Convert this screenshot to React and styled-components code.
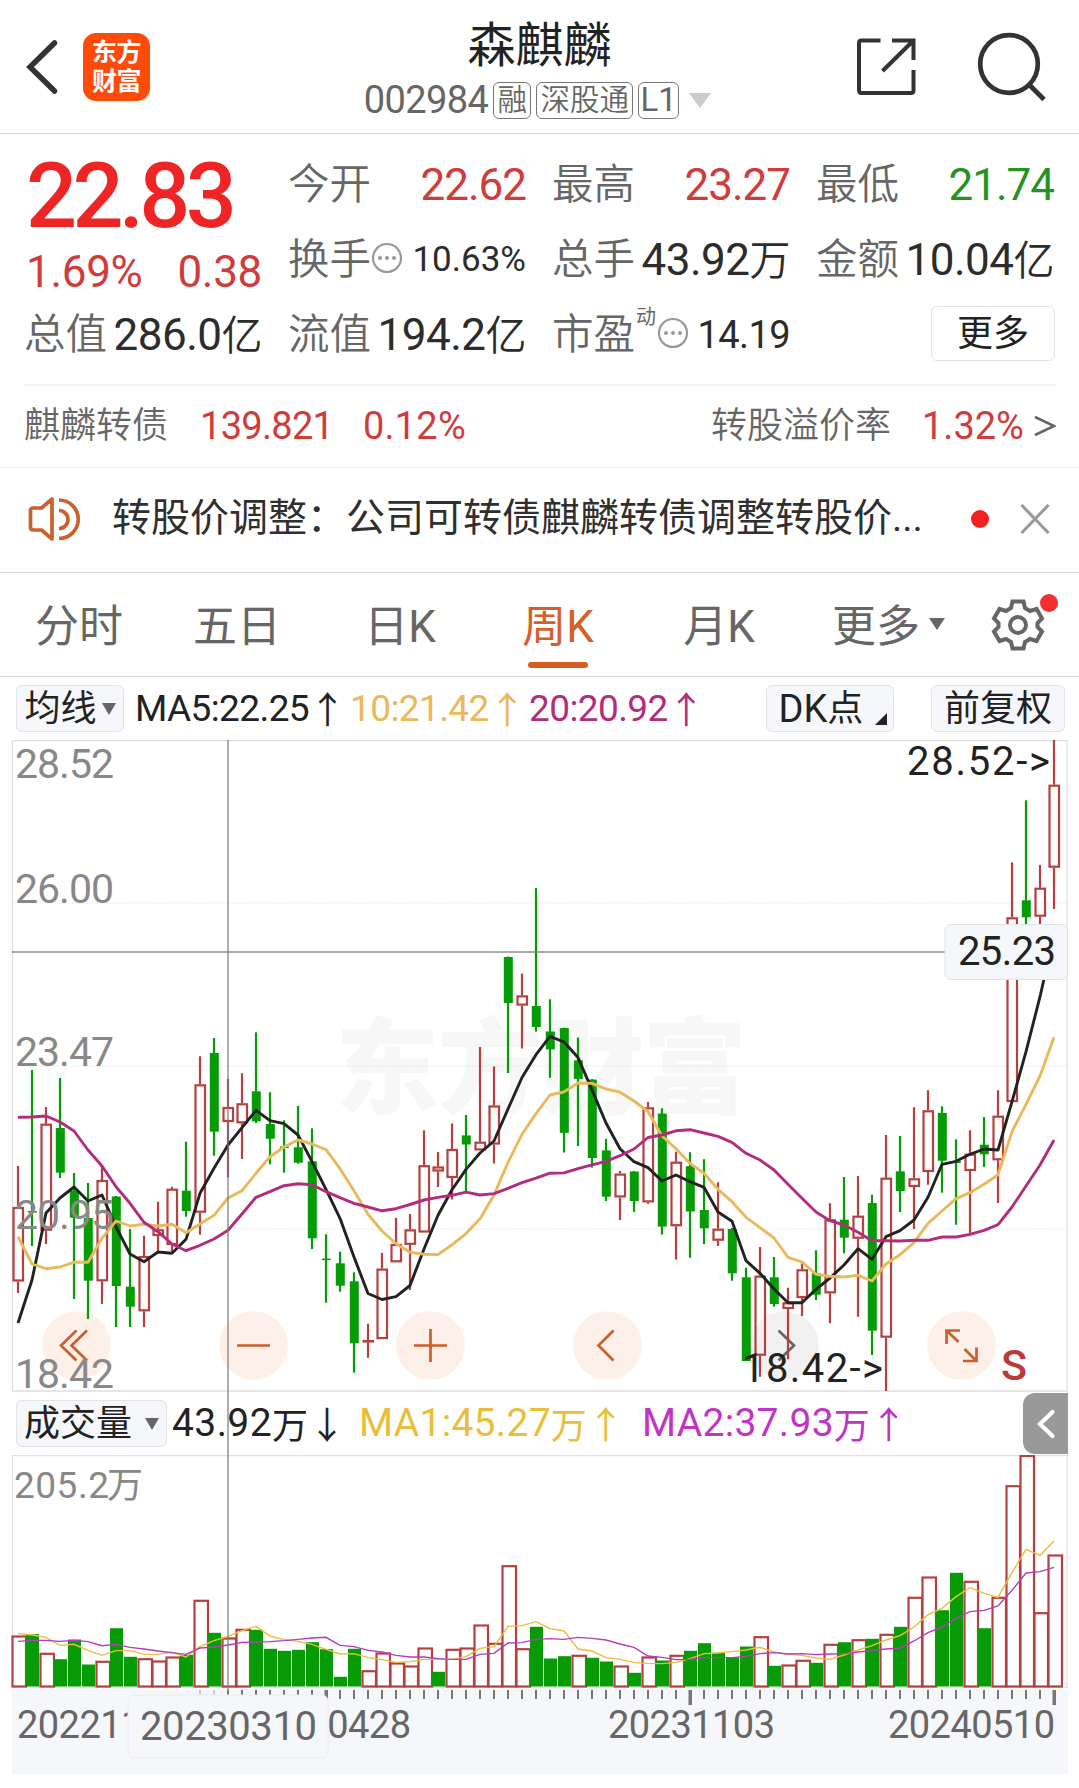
import React from "react";
import styled, { createGlobalStyle, css } from "styled-components";

const RED = "#b5403f";
const GREEN = "#079c07";
const STEP = 14;
const FIRST_X = 18;

const x = (i) => FIRST_X + i * STEP;

// [up/down, high, body top, body bottom, low], measured from the top of the plot
const candles = [
  ["r", 426, 467, 541.5, 553], ["g", 330, 471, 472, 506], ["r", 367, 383.7, 490.7, 504],
  ["g", 338, 388, 432.7, 438], ["g", 433, 450.7, 477.7, 559], ["g", 443, 478, 540.7, 579],
  ["r", 427, 440, 541.3, 564], ["g", 456, 456.5, 546, 587], ["g", 489, 546.7, 566.7, 587],
  ["r", 495.7, 516, 571.3, 587], ["r", 461.7, 489.3, 496, 511], ["r", 446.7, 448.7, 505, 511.7],
  ["g", 401.7, 450.7, 471, 476.7], ["r", 316.3, 344.3, 472.7, 494.7], ["g", 298, 313, 391.7, 415.7],
  ["r", 339, 367, 382, 437.3], ["r", 333.3, 363.3, 383.3, 419], ["g", 292.3, 351.3, 381.3, 383],
  ["g", 352.3, 384, 398.7, 424.3], ["g", 380.3, 406.5, 408, 432.7], ["g", 366, 407.3, 422.7, 423.7],
  ["g", 388.3, 421.3, 498.3, 509], ["g", 494.3, 518.6, 520, 562.7], ["g", 511.7, 523.3, 545.7, 551.7],
  ["g", 532.3, 541.3, 603.3, 632.7], ["r", 583.7, 600, 602.5, 617.7], ["r", 512.9, 528.6, 599.1, 599.1],
  ["r", 477.8, 504, 522.3, 522.3], ["r", 474, 489.4, 504.8, 550], ["r", 390.4, 425.2, 492.5, 492.5],
  ["r", 412, 426.5, 431.5, 447], ["r", 383.4, 409, 438, 459.5], ["g", 375, 395.4, 404.5, 451.5],
  ["r", 307, 401.7, 410.4, 410.4], ["r", 326.6, 365.5, 404.5, 423.4], ["g", 216.5, 217, 263, 333],
  ["r", 233.6, 255.4, 265.6, 308.4], ["g", 148, 266, 287, 291.5], ["g", 259.3, 291.5, 309.4, 337.8],
  ["g", 287.7, 288, 392.9, 412.5], ["g", 297.5, 320.3, 338.9, 406], ["g", 339, 339.6, 418, 427.6],
  ["g", 398.9, 410.4, 456.7, 461], ["r", 431, 433.6, 457.4, 480], ["g", 431, 431.5, 461, 471.8],
  ["r", 362, 367.3, 462.4, 464], ["g", 368.3, 373.6, 486.6, 494.6], ["r", 411.8, 421.7, 486.2, 519.5],
  ["g", 412.2, 426.2, 471.5, 517.8], ["g", 419.2, 470, 488.3, 504], ["r", 442.3, 488.7, 500.7, 506],
  ["g", 488, 489, 533.3, 540.7], ["g", 527.7, 537.3, 621, 621], ["r", 507, 535.7, 615.7, 636.7],
  ["g", 517, 537.3, 564, 566.7], ["r", 547.7, 562.3, 569, 619.3], ["r", 523.3, 529.3, 558, 576],
  ["g", 510.3, 533.3, 554.7, 560], ["r", 463.3, 479.3, 553.3, 583.3], ["g", 437, 479.7, 497.7, 513.3],
  ["r", 436, 475.7, 498.7, 576.7], ["g", 454.7, 463, 590.7, 615], ["r", 395, 437.7, 597.7, 651],
  ["g", 396, 431.3, 451, 472], ["r", 367.3, 438.3, 447, 489], ["r", 350.3, 370.3, 432, 444.7],
  ["g", 366.3, 373, 420.7, 452.7], ["g", 399.3, 421, 423, 484.7], ["r", 390.3, 413.7, 431, 493.3],
  ["g", 377, 404.7, 414.3, 427], ["r", 350.3, 375.7, 420.3, 463], ["r", 122.3, 177.3, 362, 362],
  ["g", 60.3, 160.3, 177.3, 200], ["r", 125, 147.7, 176.7, 200], ["r", 0, 44.7, 127.7, 169],
];

const ma5 = [
  583, 540, 473, 458, 447, 461, 455, 487, 514, 521.7, 512, 513.3, 499.3, 453.3, 428.3, 405, 387.7,
  370.3, 380.7, 383.7, 395, 421.7, 449.3, 478.3, 517, 553.5, 559.5, 556.7, 545.5, 509, 475.3, 449.7,
  429.4, 413, 401, 369, 337.5, 314.7, 296.4, 302, 317.5, 349.8, 383, 408.7, 421.7, 427.6, 441, 435,
  441.7, 447.3, 472, 481.3, 520.7, 533.3, 549, 562.7, 562.7, 549.3, 538, 525, 508.7, 519.3, 496.7,
  490.7, 480, 457.3, 424.3, 421.3, 414.3, 409, 410, 361.7, 311.7, 256.7, 195,
];

const ma10 = [
  496.7, 524, 528.7, 527, 522.3, 522.3, 498.3, 481, 486, 484.3, 486, 484.3, 492.7, 484, 475.3, 458,
  450.7, 433.3, 416.7, 407, 400, 404, 409.7, 428.7, 450.8, 474.3, 491, 503.7, 512.2, 514.3, 514.6,
  504.8, 493.6, 478.8, 455, 422.4, 394.3, 373.6, 355, 351.9, 343, 343.4, 349, 352.2, 361, 371.5, 396,
  408.7, 423.4, 433.2, 449.3, 461.7, 477.3, 487.7, 498, 517.3, 522, 534.3, 536.3, 537, 535.3, 541, 524,
  514.7, 502.7, 483.3, 471, 458.7, 452.7, 444.3, 434.7, 391.7, 364.3, 336, 297.3,
];

const ma20 = [
  377.3, 377, 376, 382, 391, 410, 426, 446.7, 463.3, 482.3, 491.7, 504, 510.7, 505.3, 499, 490.3, 474,
  457.3, 451.7, 445.7, 443.7, 444.7, 451.7, 457.7, 463.3, 467, 470.8, 468.7, 464.5, 460, 457.4, 455.3,
  452.2, 455, 453.6, 448.3, 442.7, 438.2, 433.2, 432.9, 428.7, 424.8, 421.3, 415.7, 409, 397.5, 395,
  390.8, 389.7, 393, 396.3, 402.3, 413.3, 420, 430, 444.3, 458.3, 472, 480.7, 485, 492.3, 500.7, 500.7,
  501, 500.3, 500.3, 497, 497, 494.3, 490.3, 484.7, 467, 446, 425, 400,
];

const volumeColors =
  "rgrgggrggrrrgrgrrggggggggrrrrrgrrrrrrg" + "ggrggrgrgrgggggrgrrgrgrgrgrrggrgrrrrr";

const volumes = [
  51, 52.3, 33.7, 27.3, 47, 22, 25.7, 58.3, 29.7, 28.3, 26, 30, 31.7, 86.7, 53.7, 49, 57.7, 56.7, 37.7,
  35.7, 36.7, 44.3, 37.3, 9.7, 37.7, 16.3, 34, 24, 21, 39, 14.7, 37.7, 39, 62, 43.7, 121.3, 38.3, 59.7,
  28, 30.3, 31.7, 28.7, 25, 21, 13.7, 30, 26, 31.7, 35.7, 43.3, 33.7, 29.3, 40, 50.3, 20.7, 22, 26.7,
  23.7, 42.7, 44.3, 47.3, 47.7, 52.7, 59.7, 89.7, 110, 76.3, 113.7, 105.7, 58.3, 89.7, 201.3, 231.5,
  74.3, 132,
];

// thirds of a pixel
const volMa1 = [
  731, 735, 742, 766, 763, 781, 796, 782, 782, 793, 793, 787, 801, 770, 752, 739, 722, 709, 738, 749,
  754, 763, 778, 792, 791, 803, 809, 817, 815, 808, 808, 808, 800, 775, 770, 709, 707, 695, 716, 723,
  777, 783, 803, 808, 818, 820, 821, 817, 806, 791, 789, 785, 780, 772, 786, 793, 796, 804, 808, 795,
  780, 767, 750, 737, 711, 674, 655, 620, 593, 610, 622, 548, 478, 496, 453,
];

const volMa2 = [
  754, 751, 751, 754, 751, 755, 767, 763, 772, 777, 783, 788, 793, 774, 771, 765, 757, 756, 755, 752,
  748, 744, 742, 766, 770, 781, 786, 796, 801, 801, 806, 808, 808, 793, 790, 759, 758, 748, 746, 748,
  742, 745, 750, 762, 772, 798, 802, 809, 808, 803, 803, 803, 799, 791, 788, 792, 791, 794, 792, 791,
  786, 782, 777, 774, 753, 728, 711, 685, 665, 661, 648, 601, 549, 545, 532,
];

const toPoints = (values) => values.map((v, i) => `${x(i)},${v}`).join(" ");
const toVolPoints = (values) => toPoints(values.map((v) => v / 3 - 65));

const priceLabels = [
  ["28.52", 38], ["26.00", 163], ["23.47", 326], ["20.95", 489], ["18.42", 648],
];

const tabs = [
  { label: "分时", width: 158 },
  { label: "五日", width: 158 },
  { label: "日K", width: 168 },
  { label: "周K", width: 148, active: true },
  { label: "月K", width: 174 },
];

const Candle = ({ index, data }) => {
  const [kind, high, top, bottom, low] = data;
  const cx = x(index);
  if (kind === "g") {
    return (
      <g fill={GREEN}>
        <rect x={cx - 1.1} y={high} width="2.2" height={low - high} />
        <rect x={cx - 4.2} y={top} width="9" height={Math.max(bottom - top, 1.5)} />
      </g>
    );
  }
  return (
    <g stroke={RED} strokeWidth="2.2" fill="none">
      <path d={`M${cx} ${high}V${top}M${cx} ${bottom}V${low}`} />
      <rect x={cx - 4.5} y={top + 1} width="9.5" height={Math.max(bottom - top - 2, 0.5)} />
    </g>
  );
};

const MoreDots = () => (
  <DotsSvg width="32" height="32" viewBox="0 0 32 32" fill="none">
    <circle cx="16" cy="16" r="14" stroke="#999" strokeWidth="2.2" />
    <g fill="#999">
      <circle cx="9" cy="16" r="2" />
      <circle cx="16" cy="16" r="2" />
      <circle cx="23" cy="16" r="2" />
    </g>
  </DotsSvg>
);

const PriceChart = () => (
  <ChartSvg width="1079" height="652" viewBox="0 0 1079 652">
    <text x="335" y="366" fontSize="104" fontWeight="900" fill="#f7f7f7" textLength="412">
      东方财富
    </text>
    <path d="M12 .5H1068M12 651H1068" stroke="#e0e0e0" strokeWidth="1.5" />
    <path d="M12.5 0V651M1067 0V651" stroke="#e0e0e0" strokeWidth="1.3" />
    <path d="M12 163H1067M12 326H1067M12 489H1067" stroke="#ddd" strokeDasharray="1 1.5" />
    {[0, 1, 2, 3, 4, 5].map((n) => (
      <circle key={n} cx={76.5 + n * 177} cy="605.5" r="34.3" fill={n === 4 ? "#f1f1f1" : "#fcf0e9"} />
    ))}
    <g stroke="#cb5f2b" strokeWidth="2.7" fill="none">
      <path d="M76.5 590.5L61 605.5L76.5 620.5M87 590.5L71.5 605.5L87 620.5" />
      <path d="M237 605.5H270" />
      <path d="M414 605.5H447M430.5 589V622" />
      <path d="M613.5 590.5L598.5 605.5L613.5 620.5" />
      <path d="M778.5 590.5L794 605.5L778.5 620.5" stroke="#666" />
      <path d="M946.500 604V590.5H960M946.500 590.5L958.5 602M976.500 607.5V621H963M976.500 621L964.5 609" />
    </g>
    {candles.map((data, i) => (
      <Candle key={i} index={i} data={data} />
    ))}
    <g fill="none" strokeWidth="2.9" strokeLinejoin="round">
      <polyline points={toPoints(ma5)} stroke="#222" />
      <polyline points={toPoints(ma10)} stroke="#e9b95c" />
      <polyline points={toPoints(ma20)} stroke="#b32d7c" />
    </g>
    {priceLabels.map(([label, y]) => (
      <text key={label} x="15" y={y} fontSize="41" fill="#888" textLength="99">
        {label}
      </text>
    ))}
    <text x="907" y="35" fontSize="40" fill="#222" textLength="143">
      28.52-&gt;
    </text>
    <text x="742" y="642" fontSize="40" fill="#222" textLength="141">
      18.42-&gt;
    </text>
    <text x="1001" y="640" fontSize="43" fontWeight="500" fill="#b93a3a">
      S
    </text>
    <path d="M12 212H946" stroke="#8c8c8c" strokeWidth="1.5" />
    <rect x="945" y="184.5" width="122.5" height="55" rx="6" fill="#f6f7fa" stroke="#dfe1e5" />
    <text x="958" y="225" fontSize="40" fill="#222" textLength="98">
      25.23
    </text>
  </ChartSvg>
);

const VolumeChart = () => (
  <ChartSvg width="1079" height="234" viewBox="0 0 1079 234">
    <path d="M12 .5H1068" stroke="#e0e0e0" strokeWidth="1.5" />
    <path d="M12.5 0V233M1067 0V233M12 232.5H1068" stroke="#e0e0e0" />
    <text x="14" y="43" fill="#888" fontSize="37" textLength="95">
      205.2
    </text>
    <text x="107" y="43" fill="#888" fontSize="36">
      万
    </text>
    {volumes.map((h, i) =>
      volumeColors[i] === "g" ? (
        <rect key={i} x={x(i) - 6} y={231.5 - h} width="13" height={h} fill={GREEN} />
      ) : (
        <rect
          key={i}
          x={x(i) - 5.5}
          y={232.5 - h}
          width="13.5"
          height={h - 1}
          fill="#fff"
          stroke={RED}
          strokeWidth="2.2"
        />
      )
    )}
    <g fill="none" strokeWidth="1.4">
      <polyline points={toVolPoints(volMa1)} stroke="#ecbd3d" />
      <polyline points={toVolPoints(volMa2)} stroke="#b73bbd" />
    </g>
  </ChartSvg>
);

const TimeAxis = () => (
  <ChartSvg width="1079" height="86" viewBox="0 0 1079 86">
    <rect x="12" width="1056" height="85" fill="#f6f7fa" />
    {candles.map((_, i) => {
      if (i < 13) return null;
      const major = i === 22 || i === 48 || i === 74;
      return (
        <rect
          key={i}
          x={x(i) - (major ? 1.5 : 1)}
          y="1"
          width={major ? 3.5 : 2}
          height={major ? 15 : 9}
          fill={i < 15 ? "#ccc" : "#777"}
        />
      );
    })}
    <g fontSize="38" fill="#666">
      <text x="17" y="49" textLength="167">20221118</text>
      <text x="244" y="49" textLength="167">20230428</text>
      <text x="608" y="49" textLength="167">20231103</text>
      <text x="888" y="49" textLength="167">20240510</text>
    </g>
    <rect x="128" y="6" width="200" height="63" rx="6" fill="#f6f7fa" stroke="#ececef" />
    <text x="140" y="51" fontSize="40" fill="#666" textLength="177">
      20230310
    </text>
  </ChartSvg>
);

const App = () => {
  return (
    <Page>
      <GlobalStyle />
      <Header>
        <HeaderLeft>
          <svg width="36" height="60" viewBox="0 0 36 60" fill="none">
            <path d="M30.5 6L6 30L30.5 54" stroke="#333" strokeWidth="5.5" strokeLinecap="round" />
          </svg>
          <Logo>
            <span>东方</span>
            <span>财富</span>
          </Logo>
        </HeaderLeft>
        <HeaderCenter>
          <StockName>森麒麟</StockName>
          <StockMeta>
            <StockCode>002984</StockCode>
            <Badge $width={38}>融</Badge>
            <Badge $width={97}>深股通</Badge>
            <Badge $width={41} $latin>
              L1
            </Badge>
            <Triangle $size={11} $height={15} $color="#ccc" />
          </StockMeta>
        </HeaderCenter>
        <HeaderRight>
          <svg width="60" height="60" viewBox="0 0 60 60" fill="none" stroke="#333" strokeWidth="4">
            <path d="M24.5 3.5H5.5Q3 3.5 3 6V53Q3 56 5.5 56H55Q57.5 56 57.5 53.5V33" />
            <path d="M36 3.5H57.5V23M57 4L26.5 34" />
          </svg>
          <svg width="70" height="72" viewBox="0 0 70 72" fill="none" stroke="#333" strokeWidth="4.7">
            <circle cx="33" cy="33" r="28.8" />
            <path d="M53.5 54L68 68.5" />
          </svg>
        </HeaderRight>
      </Header>

      <Quote>
        <PriceBlock>
          <Price>22.83</Price>
          <PriceChange>
            <span>1.69%</span>
            <span>0.38</span>
          </PriceChange>
        </PriceBlock>
        <Stat>
          <Label>今开</Label>
          <Value $color="#d03b3b">22.62</Value>
        </Stat>
        <Stat>
          <Label>最高</Label>
          <Value $color="#d03b3b">23.27</Value>
        </Stat>
        <Stat>
          <Label>最低</Label>
          <Value $color="#25931f">21.74</Value>
        </Stat>
        <Stat>
          <LabelGroup>
            <Label>换手</Label>
            <MoreDots />
          </LabelGroup>
          <Value $size={35} $spacing={0}>
            10.63%
          </Value>
        </Stat>
        <Stat>
          <Label>总手</Label>
          <Value $spacing={-0.5}>
            43.92<Unit>万</Unit>
          </Value>
        </Stat>
        <Stat>
          <Label>金额</Label>
          <Value $spacing={-0.5}>
            10.04<Unit>亿</Unit>
          </Value>
        </Stat>
        <Stat>
          <Label>总值</Label>
          <Value $spacing={-0.5}>
            286.0<Unit>亿</Unit>
          </Value>
        </Stat>
        <Stat>
          <Label>流值</Label>
          <Value $spacing={-0.5}>
            194.2<Unit>亿</Unit>
          </Value>
        </Stat>
        <Stat>
          <LabelGroup>
            <Label>市盈</Label>
            <Sup>动</Sup>
            <MoreDots />
          </LabelGroup>
          <Value $size={38} $spacing={-0.6}>
            14.19
          </Value>
        </Stat>
        <MoreCell>
          <MoreButton>更多</MoreButton>
        </MoreCell>
      </Quote>

      <BondRow>
        <BondText $width={176}>麒麟转债</BondText>
        <BondNumber $width={163}>139.821</BondNumber>
        <BondNumber $spacing={0.2}>0.12%</BondNumber>
        <Spacer />
        <BondText $width={211}>转股溢价率</BondText>
        <BondNumber $width={112} $spacing={0}>
          1.32%
        </BondNumber>
        <svg width="22" height="24" viewBox="0 0 22 24" fill="none">
          <path d="M1 3L20 12L1 21" stroke="#666" strokeWidth="2.5" />
        </svg>
      </BondRow>

      <Notice>
        <svg width="54" height="46" viewBox="0 0 54 46" fill="none" stroke="#c9622f" strokeWidth="3.7">
          <path d="M25 3V43L14.5 34H6Q3.5 34 3.5 31V15Q3.5 12 6 12H14.5Z" strokeLinejoin="round" />
          <path d="M32 14.5A9 9 0 0 1 32 32.5M32 4A19 19 0 0 1 32 42.5" />
        </svg>
        <NoticeText>转股价调整：公司可转债麒麟转债调整转股价...</NoticeText>
        <Dot />
        <svg width="30" height="30" viewBox="0 0 30 30">
          <path d="M1.5 1L28.5 29M28.5 1L1.5 29" stroke="#999" strokeWidth="3" />
        </svg>
      </Notice>

      <Tabs>
        {tabs.map((tab) => (
          <Tab key={tab.label} $width={tab.width} $active={tab.active}>
            {tab.label}
          </Tab>
        ))}
        <Tab $width={165}>
          更多
          <Triangle $size={8} $height={12} $color="#666" $gap={9} $drop={3} />
        </Tab>
        <Settings>
          <svg width="54" height="54" viewBox="0 0 54 54" fill="none" stroke="#666" strokeWidth="4">
            <path d="M21.5 3.5H32.5L34 10L39 13L45.5 11L51 20.5L46.5 25V29L51 33.5L45.5 43L39 41L34 44L32.5 50.5H21.5L20 44L15 41L8.5 43L3 33.5L7.5 29V25L3 20.5L8.5 11L15 13L20 10Z" />
            <circle cx="27" cy="27" r="8" />
          </svg>
          <SettingsDot />
        </Settings>
      </Tabs>

      <Charts>
        <IndicatorBar>
          <ChipButton $width={108}>
            均线
            <Triangle $size={7.5} $height={12} $color="#666" />
          </ChipButton>
          <Indicator $left={11} $width={215} $color="#222" $spacing={-0.6}>
            MA5:22.25<Arrow>↑</Arrow>
          </Indicator>
          <Indicator $width={179} $color="#e9b95c" $spacing={-0.6}>
            10:21.42<Arrow>↑</Arrow>
          </Indicator>
          <Indicator $width={236.5} $color="#b32d7c" $spacing={-0.6}>
            20:20.92<Arrow>↑</Arrow>
          </Indicator>
          <ChipButton $width={128} $corner>
            <span>DK</span>点
          </ChipButton>
          <ChipButton $width={134} $left={37.5}>
            前复权
          </ChipButton>
        </IndicatorBar>
        <PriceChart />
        <IndicatorBar>
          <ChipButton $width={151}>
            成交量
            <Triangle $size={7.5} $height={12} $color="#666" $gap={13} />
          </ChipButton>
          <Indicator $left={5} $width={187} $color="#222" $size={39} $spacing={0.4}>
            43.92<small>万</small>
            <Arrow>↓</Arrow>
          </Indicator>
          <Indicator $width={283} $color="#e9be3c" $size={39} $spacing={0.3}>
            MA1:45.27<small>万</small>
            <Arrow>↑</Arrow>
          </Indicator>
          <Indicator $width={381} $color="#c035c6" $size={39} $spacing={0.3}>
            MA2:37.93<small>万</small>
            <Arrow>↑</Arrow>
          </Indicator>
          <Handle>
            <svg width="20" height="32" viewBox="0 0 20 32" fill="none">
              <path d="M16.5 4L4 16L16.5 28" stroke="#fff" strokeWidth="4.2" strokeLinecap="round" />
            </svg>
          </Handle>
        </IndicatorBar>
        <VolumeChart />
        <TimeAxis />
        <CrossLine />
      </Charts>
    </Page>
  );
};

export default App;

const GlobalStyle = createGlobalStyle`
  * {
    box-sizing: border-box;
  }

  body {
    margin: 0;
    background: #fff;
    font-family: Roboto, "Noto Sans CJK SC", sans-serif;
    overflow: hidden;
  }

  svg {
    display: block;
    flex-shrink: 0;
  }
`;

const Page = styled.div`
  width: 1079px;
  height: 1788px;
  background: #fff;
`;

const Header = styled.header`
  display: grid;
  grid-template-columns: 300px 1fr 300px;
  height: 134px;
  border-bottom: 1px solid #d8d8d8;
`;

const HeaderLeft = styled.div`
  display: flex;
  align-items: center;
  padding-left: 24px;
  gap: 23px;
`;

const Logo = styled.div`
  display: flex;
  flex-direction: column;
  align-items: center;
  justify-content: center;
  width: 67px;
  height: 68px;
  border-radius: 13px;
  background: #ff4b0a;
  color: #fff;
  font-size: 25px;
  font-weight: 700;
  line-height: 29px;
  letter-spacing: -0.5px;
`;

const HeaderCenter = styled.div`
  display: flex;
  flex-direction: column;
  align-items: center;
  padding-top: 17px;
`;

const StockName = styled.h1`
  margin: 0;
  height: 58px;
  color: #222;
  font-size: 48px;
  font-weight: 400;
  line-height: 58px;
`;

const StockMeta = styled.div`
  display: flex;
  align-items: center;
  height: 50px;
  margin-right: 4px;
  gap: 5px;
`;

const StockCode = styled.span`
  color: #666;
  font-size: 38px;
  letter-spacing: -0.6px;
`;

const Badge = styled.span`
  display: flex;
  align-items: center;
  justify-content: center;
  width: ${(props) => props.$width}px;
  height: 37px;
  border: 1.5px solid #777;
  border-radius: 6px;
  color: #666;
  font-size: ${(props) => (props.$latin ? 33 : 29.5)}px;
  font-weight: ${(props) => (props.$latin ? 400 : 350)};
  line-height: 34px;
`;

const Triangle = styled.i`
  width: 0;
  height: 0;
  margin-top: ${(props) => props.$drop || 0}px;
  margin-left: ${(props) => props.$gap ?? 5}px;
  border-left: ${(props) => props.$size}px solid transparent;
  border-right: ${(props) => props.$size}px solid transparent;
  border-top: ${(props) => props.$height}px solid ${(props) => props.$color};
`;

const HeaderRight = styled.div`
  display: flex;
  align-items: center;
  padding-left: 77px;
  gap: 60px;
`;

const Quote = styled.section`
  display: grid;
  grid-template-columns: repeat(4, 238px);
  grid-template-rows: repeat(3, 75px);
  column-gap: 26px;
  height: 250px;
  padding: 13px 0 0 24px;
`;

const PriceBlock = styled.div`
  grid-row: 1 / 3;
  padding: 13px 0 0 2px;
`;

const Price = styled.div`
  color: #ef2424;
  font-size: 90px;
  font-weight: 500;
  line-height: 74px;
  letter-spacing: -4.7px;
`;

const PriceChange = styled.div`
  display: flex;
  justify-content: space-between;
  color: #d03b3b;
  font-size: 44px;
  line-height: 52px;
  margin-top: 12px;
  letter-spacing: -0.3px;
`;

const Stat = styled.div`
  display: flex;
  align-items: center;
  justify-content: space-between;
  white-space: nowrap;
`;

const LabelGroup = styled.div`
  display: flex;
  align-items: center;
`;

const DotsSvg = styled.svg`
  margin-bottom: 4px;
`;

const Label = styled.span`
  color: #666;
  font-size: 41.5px;
  font-weight: 350;
  line-height: 60px;
`;

const Sup = styled.span`
  align-self: flex-start;
  width: 21px;
  margin-left: 1px;
  color: #666;
  font-size: 20px;
  line-height: 24px;
`;

const Value = styled.span`
  color: ${(props) => props.$color || "#2c2c2c"};
  font-size: ${(props) => props.$size || 44}px;
  letter-spacing: ${(props) => props.$spacing ?? -1}px;
`;

const Unit = styled.span`
  font-size: 41px;
  font-weight: 350;
  line-height: 0;
`;

const MoreCell = styled.div`
  display: flex;
  align-items: center;
  justify-content: flex-end;
  padding-bottom: 2px;
`;

const MoreButton = styled.button`
  width: 124px;
  height: 55px;
  margin-right: -1px;
  padding: 0;
  border: 1.5px solid #e4e5e8;
  border-radius: 6px;
  background: #fff;
  color: #222;
  font-family: inherit;
  font-size: 36px;
  line-height: 50px;
`;

const BondRow = styled.div`
  display: flex;
  align-items: center;
  height: 83px;
  margin: 0 23px 0 24px;
  padding-bottom: 2px;
  border-top: 2px solid #f3f3f3;
  line-height: 44px;
  white-space: nowrap;
`;

const BondText = styled.span`
  width: ${(props) => props.$width}px;
  color: #666;
  font-size: 36px;
  font-weight: 350;
`;

const BondNumber = styled.span`
  width: ${(props) => (props.$width ? `${props.$width}px` : "auto")};
  color: #d03b3b;
  font-size: 38px;
  letter-spacing: ${(props) => props.$spacing ?? -0.7}px;
`;

const Spacer = styled.div`
  flex: 1;
`;

const Notice = styled.div`
  display: flex;
  align-items: center;
  height: 106px;
  padding: 0 29px 2px 27px;
  border-top: 1px solid #ececec;
  border-bottom: 1px solid #d8d8d8;
`;

const NoticeText = styled.div`
  flex: 1;
  margin-left: 31px;
  padding-bottom: 2px;
  color: #2f2f2f;
  font-size: 39px;
  line-height: 44px;
  white-space: nowrap;
`;

const Dot = styled.i`
  width: 18px;
  height: 18px;
  margin-right: 31px;
  border-radius: 50%;
  background: #f22121;
`;

const Tabs = styled.nav`
  display: flex;
  height: 104px;
  border-bottom: 1px solid #d8d8d8;
`;

const Tab = styled.div`
  position: relative;
  display: flex;
  align-items: center;
  justify-content: center;
  width: ${(props) => props.$width}px;
  padding-bottom: 4px;
  color: ${(props) => (props.$active ? "#d4602a" : "#666")};
  font-size: 44px;

  ${(props) =>
    props.$active &&
    css`
      &::after {
        content: "";
        position: absolute;
        bottom: 8px;
        left: calc(50% - 30px);
        width: 60px;
        height: 6px;
        border-radius: 3px;
        background: #d65d22;
      }
    `}
`;

const Settings = styled.div`
  position: relative;
  display: flex;
  align-items: center;
  margin-left: 20px;
`;

const SettingsDot = styled.i`
  position: absolute;
  top: 21px;
  right: -13px;
  width: 18px;
  height: 18px;
  border-radius: 50%;
  background: #f33030;
`;

const Charts = styled.section`
  position: relative;
`;

const ChartSvg = styled.svg`
  font-family: Roboto, "Noto Sans CJK SC", sans-serif;
`;

const IndicatorBar = styled.div`
  display: flex;
  align-items: center;
  height: 63px;
  padding-left: 16px;
`;

const ChipButton = styled.div`
  position: relative;
  display: flex;
  flex-shrink: 0;
  align-items: center;
  justify-content: ${(props) => (props.$corner ? "flex-start" : "center")};
  width: ${(props) => props.$width}px;
  height: 47px;
  margin-left: ${(props) => props.$left || 0}px;
  padding-left: ${(props) => (props.$corner ? 12 : 0)}px;
  border: 1px solid #e2e4e8;
  border-radius: 6px;
  background: #f6f7fa;
  color: #222;
  font-size: 36px;
  line-height: 44px;

  span {
    font-size: 38px;
  }

  ${(props) =>
    props.$corner &&
    css`
      &::after {
        content: "";
        position: absolute;
        right: 6px;
        bottom: 6px;
        border-left: 12px solid transparent;
        border-bottom: 12px solid #222;
      }
    `}
`;

const Indicator = styled.div`
  display: flex;
  flex-shrink: 0;
  align-items: center;
  width: ${(props) => props.$width}px;
  margin-left: ${(props) => props.$left || 0}px;
  padding-bottom: 1px;
  color: ${(props) => props.$color};
  font-size: ${(props) => props.$size || 37}px;
  letter-spacing: ${(props) => props.$spacing}px;
  white-space: nowrap;

  small {
    font-size: 36px;
  }
`;

const Arrow = styled.span`
  width: 37px;
  font-size: 37px;
`;

const Handle = styled.div`
  display: flex;
  align-items: center;
  justify-content: center;
  width: 45px;
  height: 61px;
  border-radius: 12px 0 0 12px;
  background: #999;
`;

const CrossLine = styled.div`
  position: absolute;
  top: 63px;
  left: 227px;
  width: 2px;
  height: 954px;
  background: rgba(120, 120, 120, 0.6);
`;
